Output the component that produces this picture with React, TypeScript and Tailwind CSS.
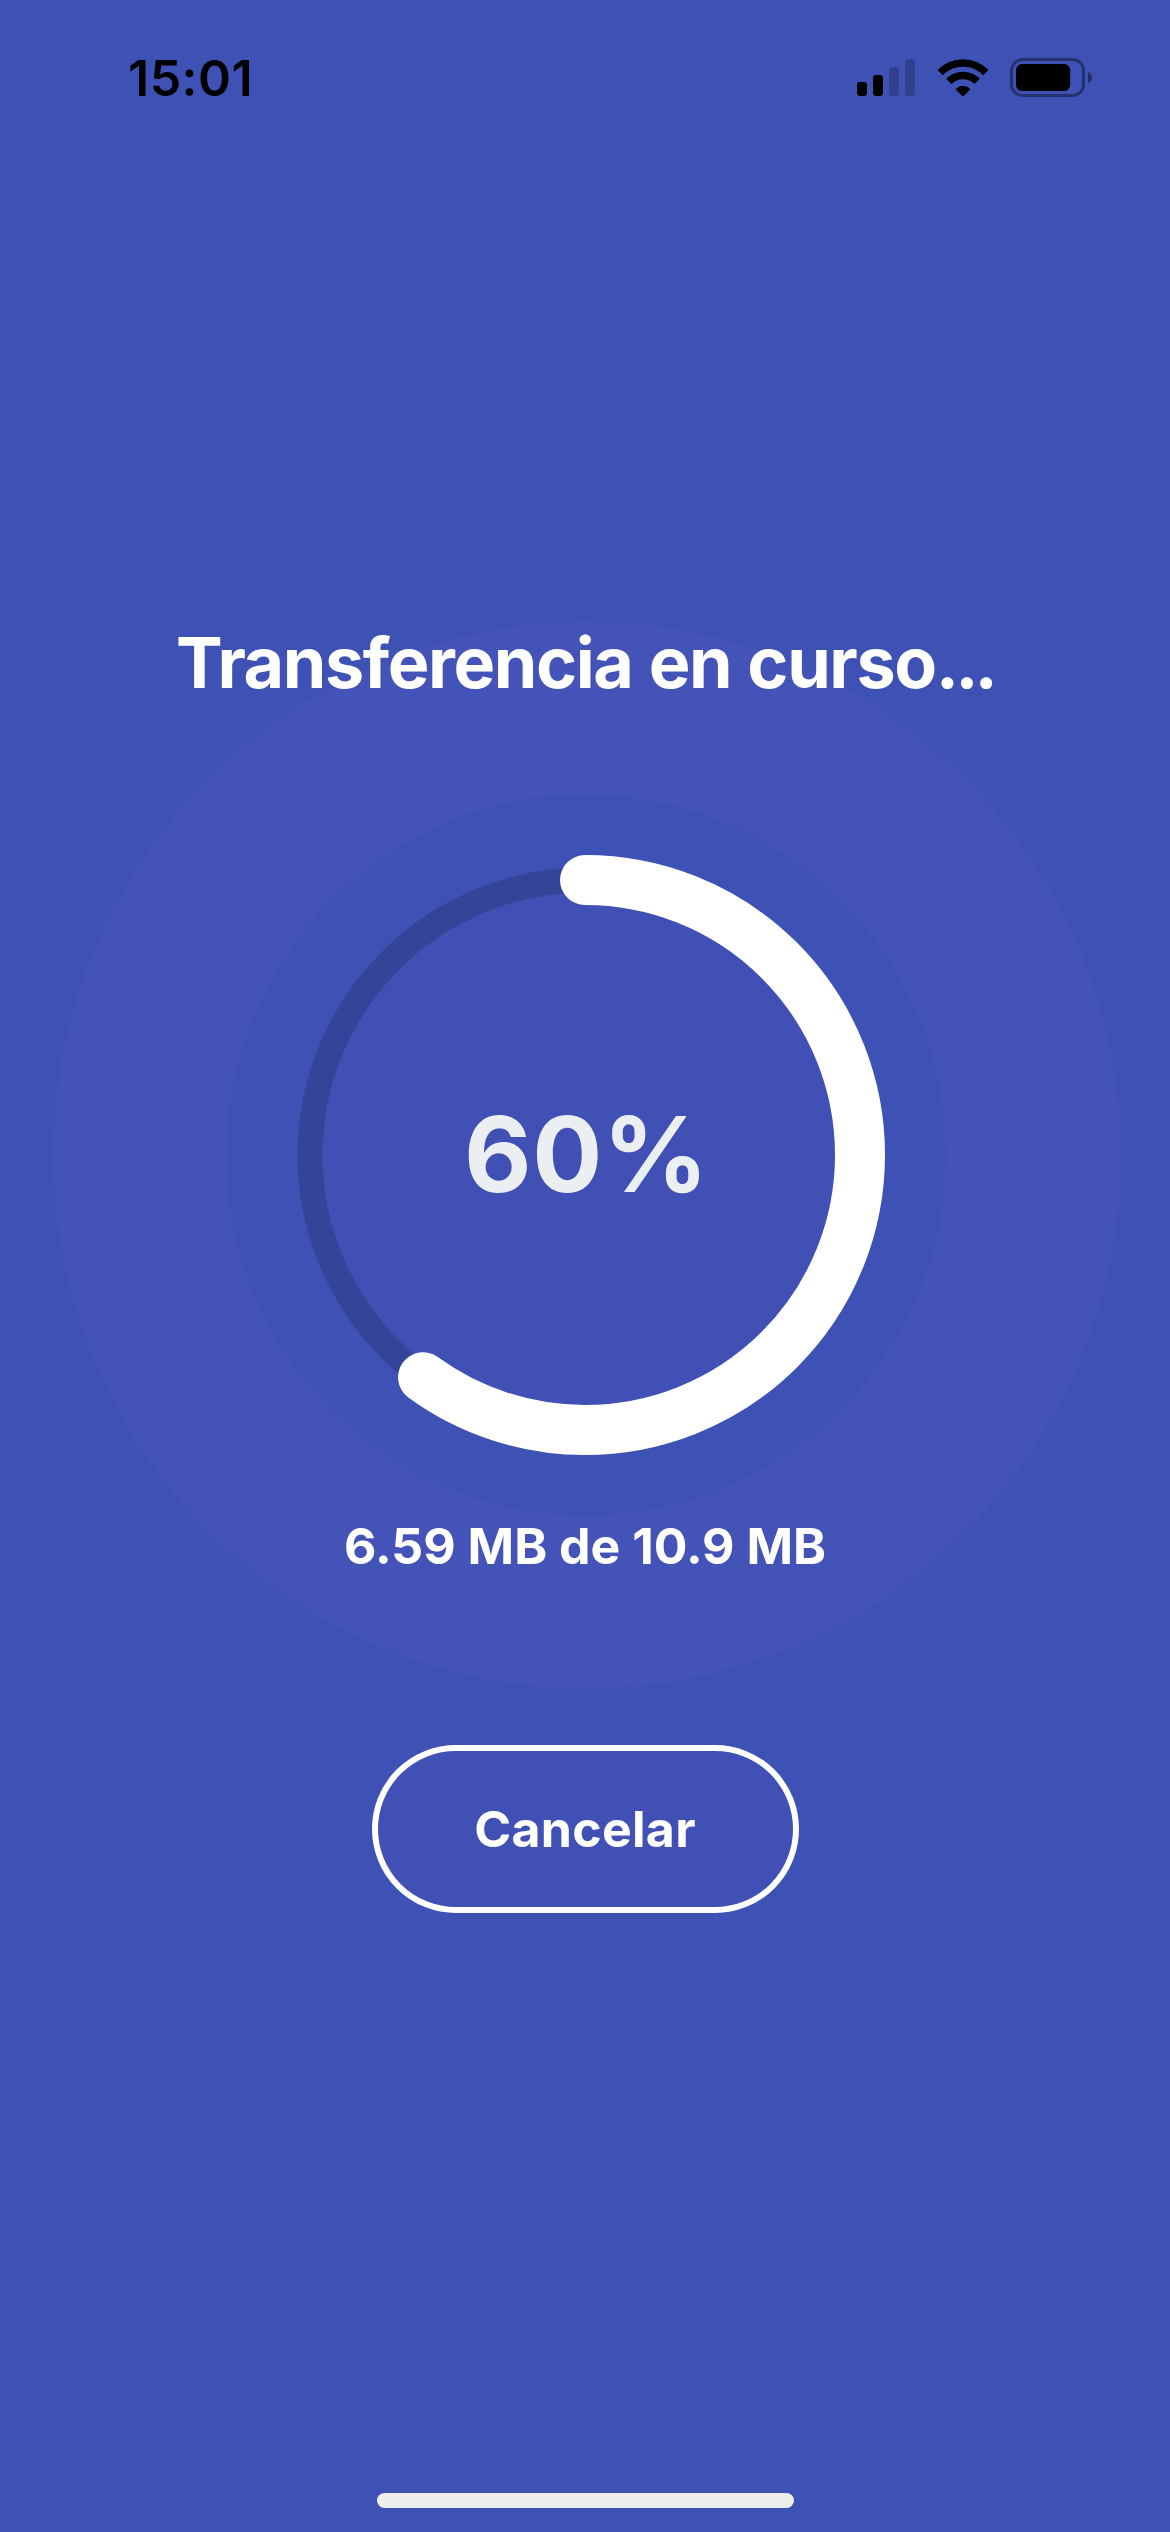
import { useState } from 'react';

const RADIUS = 275;
const CIRCUMFERENCE = 2 * Math.PI * RADIUS;

function SignalIcon() {
  return (
    <svg width="58" height="37" viewBox="0 0 58 37">
      <rect x="0" y="23" width="10" height="14" rx="3" />
      <rect x="16" y="16" width="10" height="21" rx="3" />
      <rect x="32" y="8" width="10" height="29" rx="3" opacity="0.2" />
      <rect x="48" y="0" width="10" height="37" rx="3" opacity="0.2" />
    </svg>
  );
}

function WifiIcon() {
  return (
    <svg width="52" height="38" viewBox="0 0 52 38" fill="none" stroke="#000">
      <path d="M3.2 13.6 A32 32 0 0 1 48.8 13.6" strokeWidth="7.4" />
      <path d="M11.8 22.4 A20 20 0 0 1 40.2 22.4" strokeWidth="7.4" />
      <path
        d="M19 30.2 A10 10 0 0 1 33 30.2 L26.8 36.5 Q26 37.2 25.2 36.5 Z"
        fill="#000"
        strokeWidth="1"
        strokeLinejoin="round"
      />
    </svg>
  );
}

function BatteryIcon({ level }: { level: number }) {
  return (
    <svg width="82" height="39" viewBox="0 0 82 39">
      <rect
        x="1.5"
        y="1.5"
        width="72"
        height="36"
        rx="11"
        fill="none"
        stroke="#000"
        strokeWidth="3"
        opacity="0.4"
      />
      <rect x="6" y="6" width={level * 63} height="27" rx="6" />
      <path d="M78 14 Q82 16 82 19.5 Q82 23 78 25 Z" opacity="0.45" />
    </svg>
  );
}

function StatusBar() {
  return (
    <header className="flex h-[156px] items-start justify-between pt-[58px] pr-[78px] pl-[128px]">
      <span className="text-[50px] leading-[40px] font-semibold tracking-[0.5px] text-black">
        15:01
      </span>
      <div className="flex items-center">
        <SignalIcon />
        <div className="ml-[22px]">
          <WifiIcon />
        </div>
        <div className="ml-[21px]">
          <BatteryIcon level={0.86} />
        </div>
      </div>
    </header>
  );
}

function ProgressRing({ percent }: { percent: number }) {
  return (
    <div className="relative flex h-[600px] w-[600px] items-center justify-center">
      {/* halo suave detrás del anillo */}
      <div className="absolute -top-[234px] -left-[232px] h-[1068px] w-[1068px] rounded-full bg-[#4453b7]" />
      <div className="absolute -top-[60px] -left-[59px] h-[720px] w-[720px] rounded-full bg-[#3e52b5]" />
      <svg className="absolute inset-0" width="600" height="600" viewBox="0 0 600 600" fill="none">
        <circle cx="300" cy="300" r={RADIUS} fill="#4050b5" stroke="#344499" strokeWidth="25" />
        <circle
          cx="300"
          cy="300"
          r={RADIUS}
          stroke="#fff"
          strokeWidth="50"
          strokeLinecap="round"
          strokeDasharray={`${(percent / 100) * CIRCUMFERENCE} ${CIRCUMFERENCE}`}
          transform="rotate(-90 300 300)"
        />
      </svg>
      <span className="relative pb-[3px] pl-[3px] text-[104px] leading-none font-bold tracking-[0.5px] text-[#eceff1]">
        {percent}%
      </span>
    </div>
  );
}

export default function App() {
  const [percent] = useState(60);

  return (
    <div className="flex h-[2532px] w-[1170px] flex-col overflow-hidden bg-[#3e52b5] font-['Inter',sans-serif] text-white">
      <StatusBar />

      <main className="flex flex-1 flex-col items-center pt-[463px]">
        <h1 className="relative z-10 h-[88px] text-[70px] leading-[88px] font-bold tracking-[-1.4px] [word-spacing:1px] whitespace-nowrap">
          Transferencia en curso<span className="tracking-[-4px]">...</span>
        </h1>

        <div className="mt-[148px]">
          <ProgressRing percent={percent} />
        </div>

        <p className="relative mt-[61px] h-[60px] text-[50px] leading-[60px] font-bold whitespace-nowrap">
          6.59 MB de 10.9 MB
        </p>

        <button className="relative mt-[169px] flex h-[168px] w-[427px] items-center justify-center rounded-full border-[6px] border-white bg-[#4050b5] text-[50px] font-bold tracking-[0.3px]">
          Cancelar
        </button>
      </main>

      <footer className="flex justify-center pb-6">
        <div className="h-[15px] w-[417px] rounded-full bg-[#efeeee]" />
      </footer>
    </div>
  );
}
